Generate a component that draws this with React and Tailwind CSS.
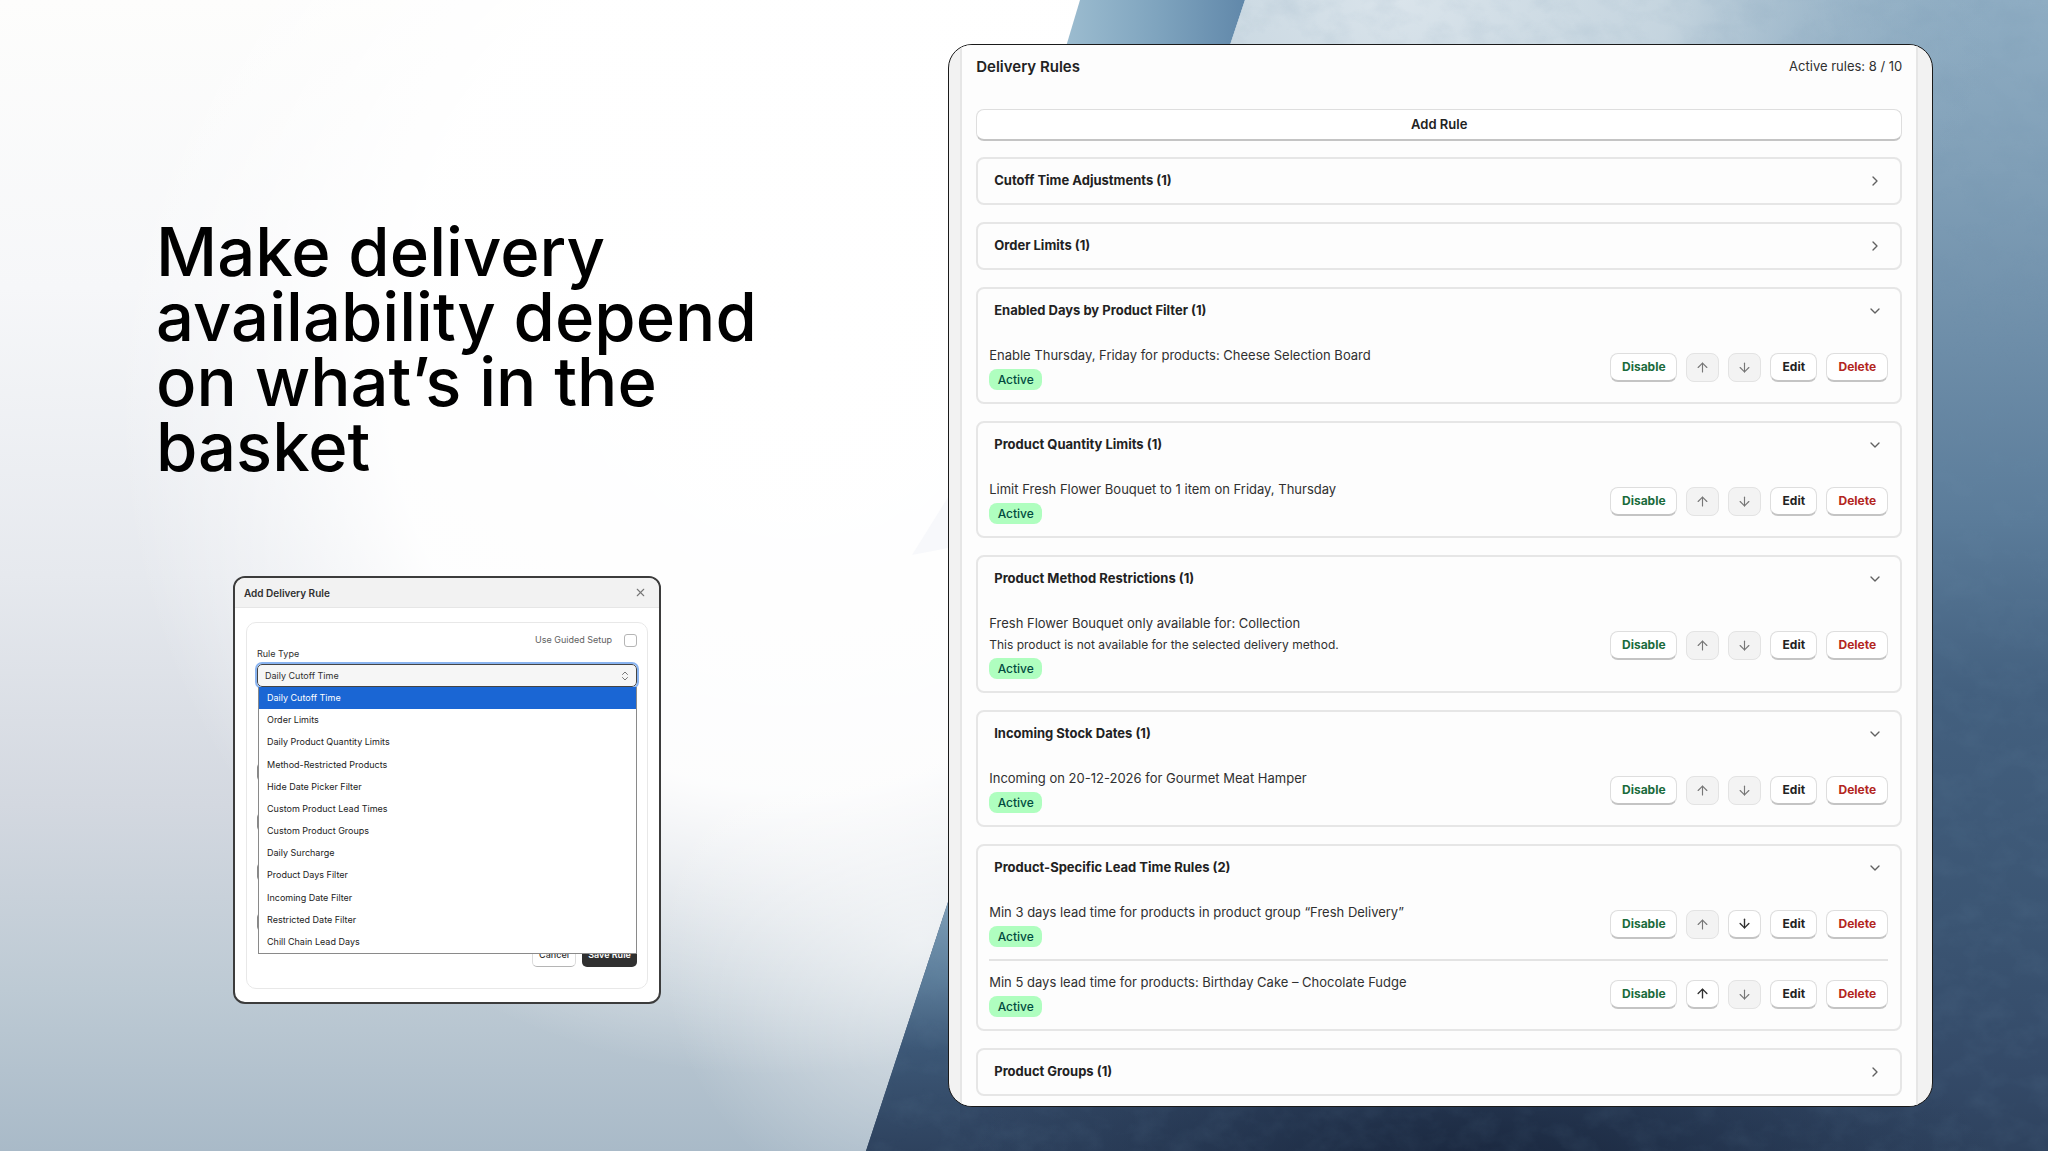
import React, { useState } from "react";
import { ArrowDown, ArrowUp, ChevronDown, ChevronRight, ChevronsUpDown, X } from "lucide-react";

const RULE_TYPES = [
    "Daily Cutoff Time",
    "Order Limits",
    "Daily Product Quantity Limits",
    "Method-Restricted Products",
    "Hide Date Picker Filter",
    "Custom Product Lead Times",
    "Custom Product Groups",
    "Daily Surcharge",
    "Product Days Filter",
    "Incoming Date Filter",
    "Restricted Date Filter",
    "Chill Chain Lead Days",
];

const RULE_FIELDS = ["Weekday", "Cutoff", "Method", "Message"];

const RULE_GROUPS = [
    { title: "Cutoff Time Adjustments", count: 1 },
    { title: "Order Limits", count: 1 },
    {
        title: "Enabled Days by Product Filter",
        count: 1,
        rules: [{ text: "Enable Thursday, Friday for products: Cheese Selection Board" }],
    },
    {
        title: "Product Quantity Limits",
        count: 1,
        rules: [{ text: "Limit Fresh Flower Bouquet to 1 item on Friday, Thursday" }],
    },
    {
        title: "Product Method Restrictions",
        count: 1,
        rules: [
            {
                text: "Fresh Flower Bouquet only available for: Collection",
                note: "This product is not available for the selected delivery method.",
            },
        ],
    },
    {
        title: "Incoming Stock Dates",
        count: 1,
        rules: [{ text: "Incoming on 20-12-2026 for Gourmet Meat Hamper" }],
    },
    {
        title: "Product-Specific Lead Time Rules",
        count: 2,
        rules: [
            { text: "Min 3 days lead time for products in product group “Fresh Delivery”" },
            { text: "Min 5 days lead time for products: Birthday Cake – Chocolate Fudge" },
        ],
    },
    { title: "Product Groups", count: 1 },
];

const Backdrop = () => (
    <svg
        className="absolute inset-0 h-full w-full"
        viewBox="0 0 2048 1151"
        preserveAspectRatio="none"
        aria-hidden="true"
    >
        <defs>
            <linearGradient id="paper" x1="0" y1="0" x2="0" y2="1">
                <stop offset="0" stopColor="#fdfdfc" />
                <stop offset="0.25" stopColor="#f6f7f9" />
                <stop offset="0.5" stopColor="#e6e9ee" />
                <stop offset="0.7" stopColor="#d3d8e0" />
                <stop offset="0.86" stopColor="#bdcad4" />
                <stop offset="1" stopColor="#a9bac8" />
            </linearGradient>
            <radialGradient
                id="glow"
                gradientUnits="userSpaceOnUse"
                cx="0"
                cy="0"
                r="1"
                gradientTransform="translate(800 360) rotate(20) scale(680 720)"
            >
                <stop offset="0" stopColor="#ffffff" />
                <stop offset="0.6" stopColor="#ffffff" stopOpacity="0.94" />
                <stop offset="0.82" stopColor="#ffffff" stopOpacity="0.4" />
                <stop offset="1" stopColor="#ffffff" stopOpacity="0" />
            </radialGradient>
            <radialGradient
                id="haze"
                gradientUnits="userSpaceOnUse"
                cx="0"
                cy="0"
                r="1"
                gradientTransform="translate(920 940) scale(260 280)"
            >
                <stop offset="0" stopColor="#ffffff" stopOpacity="0.55" />
                <stop offset="1" stopColor="#ffffff" stopOpacity="0" />
            </radialGradient>
            <linearGradient id="strip" x1="0" y1="0" x2="1" y2="0">
                <stop offset="0" stopColor="#9dbdd0" />
                <stop offset="0.5" stopColor="#80a5bf" />
                <stop offset="1" stopColor="#6188aa" />
            </linearGradient>
            <linearGradient id="wall" x1="0" y1="0" x2="0" y2="1">
                <stop offset="0" stopColor="#8fadc3" />
                <stop offset="0.15" stopColor="#809fb7" />
                <stop offset="0.45" stopColor="#5b7c9a" />
                <stop offset="0.6" stopColor="#43607f" />
                <stop offset="0.8" stopColor="#3b5573" />
                <stop offset="0.93" stopColor="#344a68" />
                <stop offset="1" stopColor="#2e425e" />
            </linearGradient>
            <radialGradient
                id="light"
                gradientUnits="userSpaceOnUse"
                cx="0"
                cy="0"
                r="1"
                gradientTransform="translate(1400 0) scale(600 380)"
            >
                <stop offset="0" stopColor="#dae4eb" />
                <stop offset="0.45" stopColor="#cbd9e2" stopOpacity="0.9" />
                <stop offset="1" stopColor="#8fadc3" stopOpacity="0" />
            </radialGradient>
            <radialGradient
                id="shade"
                gradientUnits="userSpaceOnUse"
                cx="0"
                cy="0"
                r="1"
                gradientTransform="translate(1480 1190) scale(520 220)"
            >
                <stop offset="0" stopColor="#162238" />
                <stop offset="1" stopColor="#1d2c45" stopOpacity="0" />
            </radialGradient>
            <linearGradient id="edge" x1="0" y1="0" x2="0" y2="1">
                <stop offset="0" stopColor="#7f9fb8" />
                <stop offset="0.3" stopColor="#5e7f9c" />
                <stop offset="0.6" stopColor="#3c5776" />
                <stop offset="1" stopColor="#2e425e" />
            </linearGradient>
            <filter id="grain" x="0" y="0" width="100%" height="100%">
                <feTurbulence type="fractalNoise" baseFrequency="0.03 0.04" numOctaves="5" seed="7" />
                <feColorMatrix values="0 0 0 0 0.15  0 0 0 0 0.27  0 0 0 0 0.4  0.9 0 0 0 -0.36" />
            </filter>
            <clipPath id="wallClip">
                <polygon points="1245,0 2048,0 2048,1151 866,1151" />
            </clipPath>
        </defs>
        <rect width="2048" height="1151" fill="url(#paper)" />
        <rect width="2048" height="1151" fill="url(#glow)" />
        <rect width="2048" height="1151" fill="url(#haze)" />
        <polygon points="990,430 912,555 990,540" fill="#f7f8fb" />
        <polygon points="1080,0 1245,0 1225,60 1062,60" fill="url(#strip)" />
        <g clipPath="url(#wallClip)">
            <rect x="860" width="1188" height="1151" fill="url(#wall)" />
            <rect x="860" width="1188" height="400" fill="url(#light)" />
            <rect x="860" y="900" width="100" height="251" fill="url(#edge)" />
            <rect x="860" y="900" width="1188" height="251" fill="url(#shade)" />
            <rect x="860" width="1188" height="1151" filter="url(#grain)" opacity="0.25" />
        </g>
    </svg>
);

const RuleTypeDialog = () => {
    const [ruleType, setRuleType] = useState(RULE_TYPES[0]);

    return (
        <section
            aria-label="Add Delivery Rule"
            className="w-[428px] overflow-hidden rounded-xl border-2 border-[#3c3c3c] bg-white pb-[13px] text-[#303030]"
        >
            <header className="flex h-[30px] items-center justify-between border-b border-[#e6e6e6] bg-[#f2f2f2] pl-[9px] pr-[12px]">
                <h2 className="text-[10px] font-semibold leading-[14px]">Add Delivery Rule</h2>
                <button type="button" aria-label="Close" className="text-[#777]">
                    <X size={13} strokeWidth={2} />
                </button>
            </header>

            <div className="mx-[11px] mt-[14px] rounded-[10px] border border-[#e8e8e8] px-[10px] pb-[21px] pt-[10px]">
                <div className="flex h-[14px] items-center justify-end gap-3">
                    <label htmlFor="guided" className="text-[9px] leading-[12px] text-[#616161]">
                        Use Guided Setup
                    </label>
                    <input
                        id="guided"
                        type="checkbox"
                        className="h-[13px] w-[13px] appearance-none rounded-[3px] border border-[#b5b5b5] bg-white"
                    />
                </div>

                <label htmlFor="rule-type" className="block text-[9px] leading-[14px]">
                    Rule Type
                </label>

                <div className="relative mt-[3px]">
                    <select
                        id="rule-type"
                        value={ruleType}
                        onChange={(e) => setRuleType(e.target.value)}
                        className="block h-[23px] w-full appearance-none rounded-[5px] border border-[#444] bg-[#f6f6f6] px-[7px] text-[9px] outline-2 outline-[#8ab4f0]"
                    >
                        {RULE_TYPES.map((type) => (
                            <option key={type}>{type}</option>
                        ))}
                    </select>
                    <ChevronsUpDown
                        size={12}
                        className="pointer-events-none absolute right-[6px] top-[6px] text-[#777]"
                    />

                    <ul
                        role="listbox"
                        aria-label="Rule types"
                        className="absolute left-px right-0 top-full z-10 flex h-[267px] flex-col justify-between border border-t-0 border-[#8a8a8a] bg-white text-[9px] text-[#222]"
                    >
                        {RULE_TYPES.map((type) => (
                            <li
                                key={type}
                                role="option"
                                aria-selected={type === ruleType}
                                className={`h-[22px] px-2 leading-[22px] ${
                                    type === ruleType ? "bg-[#1a66d4] text-white" : ""
                                }`}
                            >
                                {type}
                            </li>
                        ))}
                    </ul>
                </div>

                <div className="mt-[76px] flex flex-col gap-8">
                    {RULE_FIELDS.map((field) => (
                        <input
                            key={field}
                            aria-label={field}
                            className="block h-[18px] w-full rounded-[4px] border border-[#888]"
                        />
                    ))}
                </div>

                <div className="mt-3 flex justify-end gap-[6px]">
                    <button
                        type="button"
                        className="h-6 w-[44px] rounded-[5px] border border-b-[#b5b5b5] border-[#dcdcdc] bg-white text-[9px] font-medium"
                    >
                        Cancel
                    </button>
                    <button
                        type="button"
                        className="h-6 w-[55px] rounded-[5px] bg-[#303030] text-[9px] font-semibold text-white"
                    >
                        Save Rule
                    </button>
                </div>
            </div>
        </section>
    );
};

const buttonBase =
    "h-[29px] rounded-lg border text-[12px] font-bold flex items-center justify-center";
const buttonRaised = "border-[#dedede] border-b-2 border-b-[#c4c4c4] bg-white";

const MoveButton = ({ label, icon: Icon, disabled }) => (
    <button
        type="button"
        aria-label={label}
        disabled={disabled}
        className={`${buttonBase} w-[33px] ${
            disabled ? "border-[#e3e3e3] bg-[#f3f3f3] text-[#777]" : `${buttonRaised} text-[#303030]`
        }`}
    >
        <Icon size={15} strokeWidth={disabled ? 1.8 : 2.2} />
    </button>
);

const RuleRow = ({ rule, first, last }) => (
    <li className="flex items-center justify-between border-[#e3e3e3] pb-3 not-first:border-t-2 not-first:pt-[10px]">
        <div>
            <p className="text-[13px] leading-[22px] text-[#303030]">{rule.text}</p>
            {rule.note && <p className="text-[12px] leading-[21px] text-[#303030]">{rule.note}</p>}
            <span className="mt-[3px] block h-[21px] w-[53px] rounded-lg bg-[#affebf] text-center text-[12px] font-medium leading-[21px] text-[#014b40]">
                Active
            </span>
        </div>
        <div className="flex gap-[9px]">
            <button type="button" className={`${buttonBase} ${buttonRaised} w-[67px] text-[#1b6b3c]`}>
                Disable
            </button>
            <MoveButton label="Move up" icon={ArrowUp} disabled={first} />
            <MoveButton label="Move down" icon={ArrowDown} disabled={last} />
            <button type="button" className={`${buttonBase} ${buttonRaised} w-[47px] text-[#222]`}>
                Edit
            </button>
            <button type="button" className={`${buttonBase} ${buttonRaised} w-[62px] text-[#b3261e]`}>
                Delete
            </button>
        </div>
    </li>
);

const RuleGroup = ({ group }) => {
    const Chevron = group.rules ? ChevronDown : ChevronRight;

    return (
        <section className="rounded-lg border-2 border-[#e6e6e6] bg-[#fdfdfd]">
            <h3>
                <button
                    type="button"
                    aria-expanded={Boolean(group.rules)}
                    className="flex h-11 w-full items-center justify-between pl-4 pr-[17px] text-[13px] font-bold text-[#222]"
                >
                    {group.title} ({group.count})
                    <Chevron size={16} strokeWidth={2} className="text-[#616161]" />
                </button>
            </h3>
            {group.rules && (
                <ul className="pl-[11px] pr-3 pt-[11px]">
                    {group.rules.map((rule, i) => (
                        <RuleRow
                            key={rule.text}
                            rule={rule}
                            first={i === 0}
                            last={i === group.rules.length - 1}
                        />
                    ))}
                </ul>
            )}
        </section>
    );
};

const DeliveryRules = () => (
    <div className="overflow-hidden rounded-3xl border border-[#1a1a1a] bg-[#f2f2f2] pl-[11px] pr-[14px]">
        <div className="border-x-2 border-[#e6e6e6] bg-[#fdfdfd] px-[14px] pb-[10px] pt-[11px]">
            <header className="flex h-[22px] items-center justify-between text-[#303030]">
                <h2 className="text-[15px] font-semibold text-[#222]">Delivery Rules</h2>
                <p className="text-[13px]">Active rules: 8 / 10</p>
            </header>
            <button
                type="button"
                className="mt-[31px] h-8 w-full rounded-lg border border-b-2 border-[#dedede] border-b-[#c4c4c4] bg-white text-[13px] font-semibold text-[#222]"
            >
                Add Rule
            </button>
            <div className="mt-4 flex flex-col gap-[17px]">
                {RULE_GROUPS.map((group) => (
                    <RuleGroup key={group.title} group={group} />
                ))}
            </div>
        </div>
    </div>
);

const App = () => (
    <main className="relative min-h-screen overflow-hidden bg-white font-['Inter',sans-serif]">
        <Backdrop />
        <div className="relative grid grid-cols-[46.3%_48.1%_1fr] items-start">
            <div className="pl-[156px] pt-[219px]">
                <h1 className="max-w-[660px] text-[67px] font-medium leading-[65px] text-black">
                    Make delivery availability depend on what’s in the basket
                </h1>
                <div className="ml-[77px] mt-[97px]">
                    <RuleTypeDialog />
                </div>
            </div>
            <div className="pt-11">
                <DeliveryRules />
            </div>
        </div>
    </main>
);

export default App;
